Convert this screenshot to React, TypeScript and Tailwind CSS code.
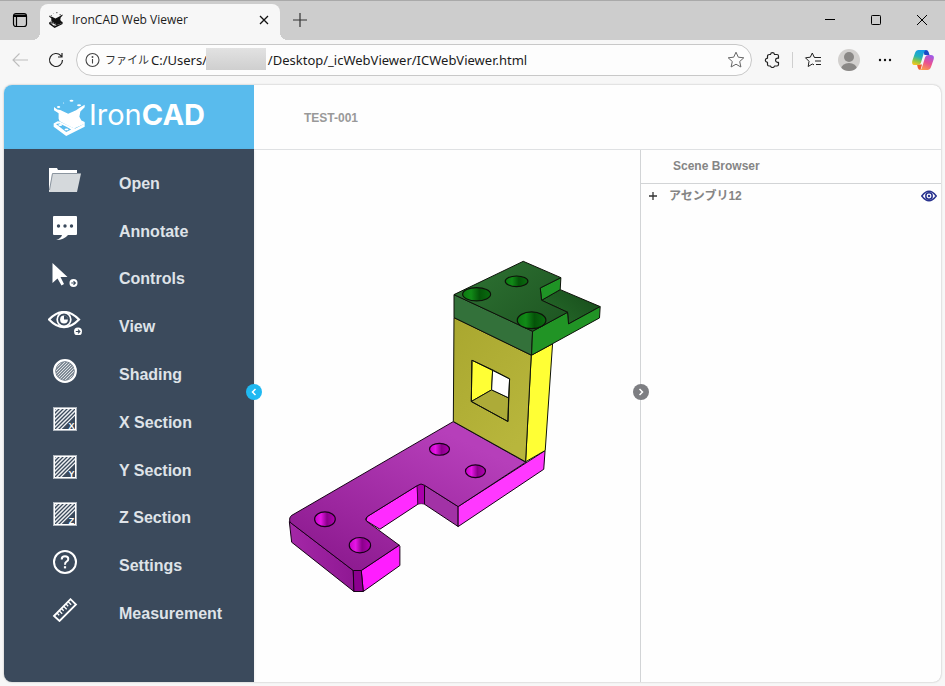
import React from "react";
import { clsx } from "clsx";

const LogoMark = ({ className }: { className?: string }) => (
  <svg viewBox="0 0 100 112" className={className} fill="currentColor" aria-hidden="true">
    <path d="M3 24L13 32L22 33L46 45L70 34L84 24L96 17V25L83 38L80 54L86 65L96 70V75L64 89L42 79L20 67L17 60V43L3 34z" />
    <path
      fillRule="evenodd"
      d="M2 74L14 67L20 68L62 88L68 89L96 74V84L40 112L2 84zM9 76L40 100L55 92L42 85L20 74z"
    />
    <ellipse cx="22" cy="79" rx="6" ry="3" />
    <ellipse cx="41" cy="92" rx="6" ry="3" />
    <ellipse cx="56" cy="5" rx="6" ry="3" />
    <ellipse cx="17" cy="24" rx="5" ry="3" />
    <ellipse cx="79" cy="19" rx="6" ry="3" />
    <ellipse cx="32" cy="12" rx="2" ry="1.500" />
  </svg>
);

const ArrowBadge = ({ cx, cy }: { cx: number; cy: number }) => (
  <g transform={`translate(${cx} ${cy})`}>
    <circle r="4" fill="#fff" />
    <path d="M-2.200 0H1.800M0 -1.800L1.900 0L0 1.800" stroke="#3b4a5c" strokeWidth="1.100" fill="none" />
  </g>
);

const FolderIcon = () => (
  <>
    <path d="M1 0h8l1 2h19v22H1z" fill="#fff" />
    <path d="M4 5.500h29l-4 18.500H1z" fill="#d5d9dc" />
    <path d="M1.500 22L4.500 5.500H33" fill="none" stroke="#8b959f" />
  </>
);

const AnnotateIcon = () => (
  <>
    <path d="M6 0h22q1 0 1 1v17q0 1-1 1h-8q-4 5-12 5q5-1.500 6-5H6q-1 0-1-1V1q0-1 1-1z" fill="#fff" />
    <circle cx="10.500" cy="10" r="1.700" fill="#3b4a5c" />
    <circle cx="17" cy="10" r="1.700" fill="#3b4a5c" />
    <circle cx="23.500" cy="10" r="1.700" fill="#3b4a5c" />
  </>
);

const ControlsIcon = () => (
  <>
    <path d="M4.500 0V20L9.500 15.500L13.500 22.500L16 21L12.500 14H19.500z" fill="#fff" />
    <ArrowBadge cx={25.5} cy={20} />
  </>
);

const EyeIcon = () => (
  <>
    <path d="M1 8.500Q16 -6.500 31 8.500Q16 24 1 8.500z" fill="none" stroke="#fff" strokeWidth="2.200" />
    <circle cx="16" cy="8.500" r="6.800" fill="none" stroke="#fff" strokeWidth="1.700" />
    <circle cx="16" cy="8.500" r="3.900" fill="#fff" />
    <path d="M16 8.500V4.500A4 4 0 0 1 20 8.500z" fill="#3b4a5c" />
    <ArrowBadge cx={30} cy={20.5} />
  </>
);

const hatch = [6, 10, 14, 18, 22, 26, 30];
const fineHatch = [5, 8, 11, 14, 17, 20, 23, 26, 29, 32, 35, 38];

const ShadingIcon = () => (
  <>
    <circle cx="17" cy="12" r="9.500" fill="#808b96" />
    <clipPath id="shade">
      <circle cx="17" cy="12" r="9" />
    </clipPath>
    <g clipPath="url(#shade)" stroke="#dfe2e5" strokeWidth="1">
      {fineHatch.map((n) => (
        <path key={n} d={`M${n - 15} 24L${n + 9} 0`} />
      ))}
    </g>
    <circle cx="17" cy="12" r="10.800" fill="none" stroke="#fff" strokeWidth="2.200" />
  </>
);

const SectionIcon = ({ axis }: { axis: string }) => (
  <>
    <clipPath id={`section-${axis}`}>
      <path d="M6 1h22v7L13 23H6z" />
    </clipPath>
    <g clipPath={`url(#section-${axis})`} stroke="#eef0f2" strokeWidth="1.500">
      {hatch.map((n) => (
        <path key={n} d={`M5 ${n}L${n + 5} 0`} />
      ))}
    </g>
    <rect x="5.500" y="0.500" width="23" height="23" fill="none" stroke="#aeb5bd" />
    <rect x="6.500" y="1.500" width="21" height="21" fill="none" stroke="#fff" />
    <text x="23.500" y="22" textAnchor="middle" fill="#fff" fontSize="9" fontWeight="700" fontFamily="Liberation Sans, sans-serif">
      {axis}
    </text>
  </>
);

const HelpIcon = () => (
  <>
    <circle cx="17" cy="12" r="11" fill="none" stroke="#fff" strokeWidth="2" />
    <path
      d="M13.700 9.500Q13.700 6.300 17 6.300Q20.300 6.300 20.300 9Q20.300 10.800 18.500 11.700Q17 12.500 17 14.700"
      fill="none"
      stroke="#fff"
      strokeWidth="2"
    />
    <rect x="15.900" y="16.200" width="2.200" height="2.200" fill="#fff" />
  </>
);

const RulerIcon = () => (
  <g fill="none" stroke="#fff">
    <path d="M6 18L22.500 1.200L28 6.500L11.500 23z" strokeWidth="1.800" />
    <path
      d="M9 15l2.200 2.200M11.200 12.700l3 3M13.500 10.500l2.200 2.200M15.700 8.200l3 3M18 6l2.200 2.200M20.200 3.700l3 3"
      strokeWidth="1.300"
    />
  </g>
);

const menu = [
  { label: "Open", icon: <FolderIcon /> },
  { label: "Annotate", icon: <AnnotateIcon /> },
  { label: "Controls", icon: <ControlsIcon /> },
  { label: "View", icon: <EyeIcon /> },
  { label: "Shading", icon: <ShadingIcon /> },
  { label: "X Section", icon: <SectionIcon axis="X" /> },
  { label: "Y Section", icon: <SectionIcon axis="Y" /> },
  { label: "Z Section", icon: <SectionIcon axis="Z" /> },
  { label: "Settings", icon: <HelpIcon /> },
  { label: "Measurement", icon: <RulerIcon /> },
];

type IconButtonProps = {
  label: string;
  className?: string;
  children: React.ReactNode;
};

const IconButton = ({ label, className, children }: IconButtonProps) => (
  <button
    type="button"
    aria-label={label}
    className={clsx("flex h-8 shrink-0 items-center justify-center", className)}
  >
    {children}
  </button>
);

const TitleBar = () => (
  <div className="flex h-10 items-end border-t border-[#a9a9a9] bg-[#cdcdcd]">
    <IconButton label="Tab actions" className="mb-1 w-10">
      <svg viewBox="0 0 16 16" className="size-4" fill="none" stroke="#000" strokeWidth="1.200">
        <rect x="1.500" y="1.500" width="13" height="13" rx="2.500" />
        <path d="M2 3.200h12M2 4.400h12M4.500 5v9" />
      </svg>
    </IconButton>
    <div className="relative flex h-9 w-60 items-center rounded-t-lg bg-[#f7f7f7] pr-1 pb-1 pl-2">
      <span className="absolute bottom-0 -left-2 size-2 bg-[radial-gradient(circle_at_0_0,transparent_8px,#f7f7f7_8px)]" />
      <span className="absolute -right-2 bottom-0 size-2 bg-[radial-gradient(circle_at_100%_0,transparent_8px,#f7f7f7_8px)]" />
      <LogoMark className="h-4 w-4 text-[#111]" />
      <span className="flex-1 pl-2 text-[12px] leading-4 text-[#1b1b1b]">IronCAD Web Viewer</span>
      <IconButton label="Close tab" className="w-6">
        <svg viewBox="0 0 10 10" className="size-[10px]" stroke="#111" strokeWidth="1.300">
          <path d="M1 1l8 8M9 1L1 9" />
        </svg>
      </IconButton>
    </div>
    <IconButton label="New tab" className="mb-1 w-10">
      <svg viewBox="0 0 14 14" className="size-[14px]" stroke="#333" strokeWidth="1.200">
        <path d="M7 0v14M0 7h14" />
      </svg>
    </IconButton>
    <div className="mb-1 ml-auto flex">
      <IconButton label="Minimize" className="w-[46px]">
        <svg viewBox="0 0 10 10" className="size-[10px]" stroke="#000">
          <path d="M0 4.500h10" />
        </svg>
      </IconButton>
      <IconButton label="Maximize" className="w-[46px]">
        <svg viewBox="0 0 10 10" className="size-[10px]" stroke="#000" fill="none">
          <rect x="0.500" y="0.500" width="9" height="9" rx="0.800" />
        </svg>
      </IconButton>
      <IconButton label="Close" className="w-[46px]">
        <svg viewBox="0 0 10 10" className="size-[10px]" stroke="#000">
          <path d="M0 0l10 10M10 0L0 10" />
        </svg>
      </IconButton>
    </div>
  </div>
);

const AddressBar = () => {
  const [url, setUrl] = React.useState(
    "C:/Users/" + "\u00a0".repeat(18) + "/Desktop/_icWebViewer/ICWebViewer.html",
  );

  return (
    <div className="relative flex h-8 min-w-0 flex-1 items-center rounded-full border border-[#c8c8c8] bg-[#fdfdfd] pl-2">
      <svg viewBox="0 0 16 16" className="size-4 shrink-0" fill="none" stroke="#444" strokeWidth="1.100">
        <circle cx="7.500" cy="8" r="6.500" />
        <path d="M7.500 7v4.500" />
        <circle cx="7.500" cy="5" r="0.400" fill="#444" />
      </svg>
      <label
        htmlFor="url"
        className="w-[50px] shrink-0 pl-1 text-[11px] leading-4 whitespace-nowrap text-[#333]"
      >
        ファイル
      </label>
      <input
        id="url"
        value={url}
        onChange={(e) => setUrl(e.target.value)}
        className="min-w-0 flex-1 bg-transparent font-['Noto_Sans',sans-serif] text-[13px] leading-5 text-[#1b1b1b] outline-none"
      />
      <span className="absolute top-[3px] left-[129px] h-[22px] w-[60px] bg-linear-to-b from-[#e2e2e2] to-[#cfcfcf]" />
      <IconButton label="Add to favorites" className="w-[30px]">
        <svg viewBox="0 0 18 18" className="size-[18px]" fill="none" stroke="#666" strokeLinejoin="round">
          <path d="M9 1.200l2.300 5l5.500.600l-4.100 3.700l1.200 5.500L9 13.200L4.100 16l1.200-5.500L1.200 6.800l5.500-.600z" />
        </svg>
      </IconButton>
    </div>
  );
};

const Toolbar = () => (
  <div className="flex h-10 items-center gap-1 bg-[#f7f7f7] px-1">
    <IconButton label="Back" className="w-8">
      <svg viewBox="0 0 16 16" className="size-4" fill="none" stroke="#bdbdbd" strokeWidth="1.100">
        <path d="M16 8H1M7.500 1.500L1 8l6.500 6.500" />
      </svg>
    </IconButton>
    <IconButton label="Refresh" className="w-8">
      <svg viewBox="0 0 16 16" className="size-4" fill="none" stroke="#222" strokeWidth="1.200">
        <path d="M14.500 8A6.500 6.500 0 1 1 12.800 3.600L14 5M14 1v4h-4" />
      </svg>
    </IconButton>
    <AddressBar />
    <IconButton label="Extensions" className="w-8">
      <svg viewBox="0 0 16 16" className="size-4" fill="none" stroke="#222" strokeWidth="1.200" strokeLinejoin="round">
        <path d="M3.500 4.500Q3.500 2.500 5.500 2.500H6.500Q6.800.600 8.500.600T10.500 2.500H13Q14.500 2.500 14.500 4V6.200H13.500Q11.500 6.500 11.500 8.300T13.500 10.400H14.500V12.500Q14.500 14 13 14H10.500Q10.200 15.500 8.500 15.500T6.500 14H5Q3.500 14 3.500 12.500V10.400Q1.300 10 1.300 8.300T3.500 6.200z" />
      </svg>
    </IconButton>
    <span className="h-4 w-px bg-[#cfcfcf]" />
    <IconButton label="Favorites" className="w-8">
      <svg viewBox="0 0 18 18" className="size-[18px]" fill="none" stroke="#222" strokeLinejoin="round">
        <path d="M11.500 6.500L10.200 6.200L8.300 2L6.300 6.200L1.500 6.800L5 10.300L4.200 15.500L8.300 13L10 13.800" />
        <path d="M10.500 6.500h6.500M11 10h6M12 13.500h5" />
      </svg>
    </IconButton>
    <IconButton label="Profile" className="w-8">
      <svg viewBox="0 0 22 22" className="size-[22px]">
        <clipPath id="avatar">
          <circle cx="11" cy="11" r="11" />
        </clipPath>
        <g clipPath="url(#avatar)">
          <path d="M0 0h22v22H0z" fill="#d2d0ce" />
          <circle cx="11" cy="8" r="5" fill="#8a8886" />
          <ellipse cx="11" cy="20" rx="8" ry="6" fill="#8a8886" />
        </g>
      </svg>
    </IconButton>
    <IconButton label="Settings and more" className="w-8">
      <svg viewBox="0 0 14 4" className="h-1 w-[14px]" fill="#111">
        <circle cx="2" cy="2" r="1.200" />
        <circle cx="7" cy="2" r="1.200" />
        <circle cx="12" cy="2" r="1.200" />
      </svg>
    </IconButton>
    <IconButton label="Copilot" className="w-9">
      <svg viewBox="0 0 22 20" className="h-5 w-[22px]">
        <defs>
          <linearGradient id="cpLeft" x1="0.600" y1="0" x2="0.300" y2="1">
            <stop offset="0" stopColor="#1799e8" />
            <stop offset="0.450" stopColor="#24b3b8" />
            <stop offset="0.750" stopColor="#8fc744" />
            <stop offset="1" stopColor="#f3c522" />
          </linearGradient>
          <linearGradient id="cpRight" x1="0.700" y1="0" x2="0.300" y2="1">
            <stop offset="0" stopColor="#a05be8" />
            <stop offset="0.500" stopColor="#ea4f93" />
            <stop offset="1" stopColor="#fb9a4c" />
          </linearGradient>
        </defs>
        <path d="M11 0h3q2 0 2.600 2L17.500 5h-5z" fill="#1b49c6" />
        <path d="M5 14.500h5L8.500 20q-2 0-2.600-2z" fill="#ef5a30" />
        <path d="M6.500 0H14q-1.500.500-2 2.500L9 12.500Q8.300 15 6 15H3Q-.800 15 .400 10.500L3 3Q4 0 6.500 0z" fill="url(#cpLeft)" />
        <path d="M15.500 20H8q1.500-.500 2-2.500L13 7.500Q13.700 5 16 5h3q3.800 0 2.600 4.500L19 17Q18 20 15.500 20z" fill="url(#cpRight)" />
      </svg>
    </IconButton>
  </div>
);

// Bracket assembly: each part is drawn in its own unit space
const Model = () => (
  <svg viewBox="254 150 386 532" className="h-full w-full" role="img" aria-label="TEST-001">
    <defs>
      <linearGradient id="baseTop" x1="0" y1="1" x2="0.700" y2="0.100">
        <stop offset="0" stopColor="#861589" />
        <stop offset="0.400" stopColor="#9b269e" />
        <stop offset="1" stopColor="#b63fba" />
      </linearGradient>
      <linearGradient id="baseFront">
        <stop offset="0" stopColor="#a428a7" />
        <stop offset="1" stopColor="#8f1893" />
      </linearGradient>
      <linearGradient id="baseHole">
        <stop offset="0" stopColor="#c800c8" />
        <stop offset="0.300" stopColor="#e616e6" />
        <stop offset="0.600" stopColor="#8a008a" />
        <stop offset="1" stopColor="#b400b4" />
      </linearGradient>
      <linearGradient id="plate" x1="0" y1="0" x2="0.600" y2="1">
        <stop offset="0" stopColor="#a9a72f" />
        <stop offset="1" stopColor="#b8b63c" />
      </linearGradient>
      <linearGradient id="capTop" x1="0" y1="0" x2="1" y2="0.700">
        <stop offset="0" stopColor="#2f7434" />
        <stop offset="1" stopColor="#1f5823" />
      </linearGradient>
      <linearGradient id="capStep" x1="0" y1="1" x2="1" y2="0.300">
        <stop offset="0" stopColor="#276c2b" />
        <stop offset="1" stopColor="#184f1c" />
      </linearGradient>
      <linearGradient id="capHole">
        <stop offset="0" stopColor="#0b7a10" />
        <stop offset="0.300" stopColor="#118a17" />
        <stop offset="0.600" stopColor="#055409" />
        <stop offset="1" stopColor="#0a6d0f" />
      </linearGradient>
    </defs>

    <g transform="translate(280 410) scale(0.333)" stroke="#160016" strokeWidth="3" strokeLinejoin="round">
      <path d="M262 320L412 227L414 283L300 358L258 332z" fill="#ff2bff" />
      <path d="M412 227L424 221L434 226V283Q424 280 414 283z" fill="#ab00ab" strokeWidth="1.500" />
      <path d="M434 226L535 290V350L434 283z" fill="#a232a6" />
      <path d="M535 290L796 122L792 178L535 350z" fill="#ff38ff" />
      <path d="M28 335L220 482L222 545L35 397z" fill="url(#baseFront)" />
      <path d="M244 482L358 406Q361 408 360 415V467L250 545z" fill="#ff1dff" />
      <path d="M220 482H244L250 545H222z" fill="#8c008f" />
      <path
        d="M36 316L520 35L738 157L535 290L434 226Q424 218 412 227L262 320Q252 328 260 334L358 406L244 482H220L30 337Q26 322 36 316z"
        fill="url(#baseTop)"
      />
      <g fill="url(#baseHole)" strokeWidth="3.500">
        <ellipse cx="479" cy="118" rx="30" ry="18" />
        <ellipse cx="587" cy="184" rx="30" ry="19" />
        <ellipse cx="135" cy="328" rx="31" ry="22" />
        <ellipse cx="240" cy="406" rx="32" ry="23" />
      </g>
    </g>

    <g transform="translate(440 250) scale(0.333)" stroke="#0e120a" strokeWidth="3" strokeLinejoin="round">
      <path d="M274 316L338 282L316 602L257 636z" fill="#ffff35" />
      <path d="M42 203L274 316L257 636L40 515z" fill="url(#plate)" />
      <path d="M96 331L158 360L155 420L94 455z" fill="#ffff35" />
      <path d="M94 455L155 420L206 444L204 515z" fill="#adab38" />
      <path d="M158 360L209 387L206 444L155 420z" fill="#fff" />
      <path d="M96 331L209 387L204 515L94 455z" fill="none" />

      <path d="M305 151L361 119L481 170L386 222L383 187z" fill="url(#capStep)" />
      <path d="M301 114L363 83L361 119L305 151z" fill="#1f9425" />
      <path d="M42 134L278 244L275 316L42 203z" fill="#33713a" />
      <path d="M278 244L383 187L386 222L481 170L479 204L275 316z" fill="#219425" />
      <path d="M42 134L250 34L363 83L301 114L305 151L383 187L278 244z" fill="url(#capTop)" />
      <g fill="url(#capHole)" strokeWidth="3.500">
        <ellipse cx="230" cy="94" rx="34" ry="16" />
        <ellipse cx="110" cy="133" rx="42" ry="20" />
        <ellipse cx="275" cy="211" rx="43" ry="25" />
      </g>
    </g>
  </svg>
);

const Sidebar = () => (
  <nav className="relative -mt-px w-[250px] shrink-0 bg-[#3b4a5c] pt-[7px] shadow-sm">
    <ul className="grid h-[478px] grid-rows-10">
      {menu.map((item) => (
        <li key={item.label}>
          <button type="button" className="flex h-full w-full items-center gap-[37px] pl-11 text-left">
            <svg viewBox="0 0 34 24" className="h-6 w-[34px] shrink-0" aria-hidden="true">
              {item.icon}
            </svg>
            <span className="pt-2 text-[16px] leading-5 font-bold text-[#dfe3e8]">{item.label}</span>
          </button>
        </li>
      ))}
    </ul>
    <button
      type="button"
      aria-label="Collapse menu"
      className="absolute top-[235px] -right-2 z-10 flex size-4 items-center justify-center rounded-full bg-[#1fb9f2]"
    >
      <svg viewBox="0 0 8 8" className="size-2" fill="none" stroke="#fff" strokeWidth="1.500">
        <path d="M5.500 1L2.500 4L5.500 7" />
      </svg>
    </button>
  </nav>
);

const SceneBrowser = () => (
  <aside className="relative w-[301px] shrink-0 border-l border-[#d2d4d6]">
    <button
      type="button"
      aria-label="Collapse scene browser"
      className="absolute top-[234px] -left-2 z-10 flex size-4 items-center justify-center rounded-full bg-[#7d7e82]"
    >
      <svg viewBox="0 0 8 8" className="size-2" fill="none" stroke="#fff" strokeWidth="1.500">
        <path d="M2.500 1L5.500 4L2.500 7" />
      </svg>
    </button>
    <h2 className="flex h-[34px] items-center border-b border-[#d2d4d6] pb-0.5 pl-8 text-[12px] leading-4 font-bold text-[#858585]">
      Scene Browser
    </h2>
    <div className="flex h-6 items-center pr-1 pl-2">
      <button type="button" aria-label="Expand" className="flex size-2 items-center justify-center">
        <svg viewBox="0 0 8 8" className="size-2" stroke="#333" strokeWidth="1.300">
          <path d="M4 0v8M0 4h8" />
        </svg>
      </button>
      <span className="flex-1 pl-3 text-[12px] leading-4 font-bold text-[#858585]">アセンブリ12</span>
      <button type="button" aria-label="Toggle visibility" className="flex h-4 w-4 items-center">
        <svg viewBox="0 0 16 12" className="h-3 w-4" fill="none" stroke="#29338f" strokeWidth="1.500">
          <path d="M.800 6Q8-3.500 15.200 6Q8 15.500.800 6z" />
          <circle cx="8" cy="6" r="3.200" />
          <circle cx="8" cy="6" r="0.500" fill="#29338f" />
        </svg>
      </button>
    </div>
  </aside>
);

const App = () => {
  return (
    <div className="flex min-h-screen flex-col bg-[#f7f7f7] font-['Open_Sans','Noto_Sans_CJK_JP',sans-serif]">
      <TitleBar />
      <Toolbar />
      <div className="mx-1 mt-[5px] mb-1 flex flex-1 flex-col overflow-hidden rounded-lg bg-[#fefefe] font-['Liberation_Sans','Noto_Sans_CJK_JP',sans-serif] shadow-[0_0_2px_rgba(0,0,0,0.3)]">
        <header className="flex h-16 shrink-0">
          <a
            href="#"
            className="flex w-[250px] shrink-0 items-center bg-[#59bbed] pl-[49px] text-white"
          >
            <LogoMark className="h-[37px] w-[33px]" />
            <span className="pb-1 pl-[3px] font-['Inter',sans-serif] text-[29px] leading-8">
              Iron<span className="font-bold">CAD</span>
            </span>
          </a>
          <h1 className="flex flex-1 items-center pt-0.5 pl-[50px] text-[12px] leading-4 font-bold text-[#999]">
            TEST-001
          </h1>
        </header>
        <div className="flex flex-1 border-t border-[#dfe1e3]">
          <Sidebar />
          <main className="min-w-0 flex-1">
            <Model />
          </main>
          <SceneBrowser />
        </div>
      </div>
    </div>
  );
};

export default App;
